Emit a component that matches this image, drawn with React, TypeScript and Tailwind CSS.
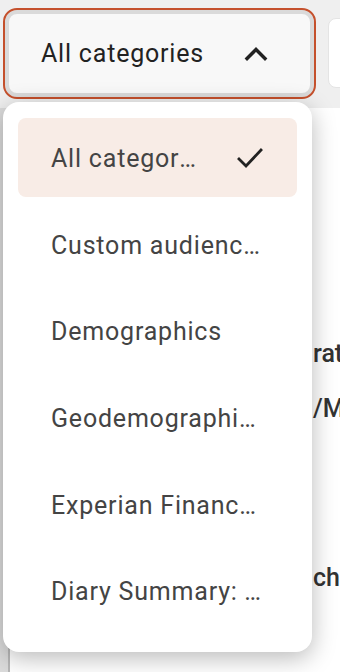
import React from 'react';

const options = [
  { label: 'All categories', width: 'max-w-[146px]' },
  { label: 'Custom audiences', width: 'max-w-[212px]' },
  { label: 'Demographics', width: 'max-w-[212px]' },
  { label: 'Geodemographics', width: 'max-w-[212px]' },
  { label: 'Experian Financial', width: 'max-w-[206px]' },
  { label: 'Diary Summary: TV', width: 'max-w-[212px]' },
];

function ChevronUp() {
  return (
    <svg width="24" height="15" viewBox="0 0 24 15" fill="none" stroke="#222" strokeWidth="3.4" strokeLinecap="square">
      <path d="M3 12.5l9-9 9 9" />
    </svg>
  );
}

function Check() {
  return (
    <svg width="28" height="24" viewBox="0 0 28 24" fill="none" stroke="#222" strokeWidth="2.8" strokeLinecap="square">
      <path d="M3 13l7 7L25 4" />
    </svg>
  );
}

export default function App() {
  return (
    <div
      className="relative w-[340px] h-[672px] overflow-hidden bg-[#dcdcdc]"
      style={{ fontFamily: 'Roboto, "Noto Sans", sans-serif' }}
    >
      {/* Header bar */}
      <div className="flex items-start gap-[12px] bg-[#efefef] h-[108px] pl-[3px] pt-[8px]">
        <button className="shrink-0 flex items-center justify-between w-[313px] h-[91px] rounded-[14px] border-2 border-[#c4502c] bg-[#f8f8f8] shadow-[inset_0_0_0_4px_#dadada] pl-[36px] pr-[46px]">
          <span className="text-[25px] text-[#222] tracking-[0.8px]">All categories</span>
          <ChevronUp />
        </button>
        <div className="shrink-0 mt-[10px] w-[40px] h-[70px] rounded-[8px] bg-white border border-[#e4e4e4]" />
      </div>

      {/* Background content panel */}
      <div className="absolute left-[8px] top-[108px] right-0 bottom-0 bg-white border-l-2 border-[#b8b8b8] pt-[231px] pl-[303px]">
        <div className="flex flex-col text-[25px] font-medium text-[#333] whitespace-nowrap">
          <span className="leading-[30px]">rat</span>
          <span className="mt-[25px] leading-[30px]">/M</span>
          <span className="mt-[139px] leading-[30px]">cha</span>
        </div>
      </div>

      {/* Dropdown menu */}
      <div className="absolute left-[3px] top-[102px] w-[309px] h-[550px] rounded-[16px] bg-white shadow-[0_6px_24px_rgba(0,0,0,0.28)] pt-[16px] px-[15px] flex flex-col gap-[7.6px]">
        {options.map((opt, i) => (
          <div
            key={opt.label}
            className={`flex items-center justify-between h-[79px] rounded-[8px] pl-[33px] pr-[33px] ${i === 0 ? 'bg-[#f8ece6]' : ''}`}
          >
            <span className={`truncate text-[25px] text-[#444] tracking-[0.8px] pt-[3px] ${opt.width}`}>
              {opt.label}
            </span>
            {i === 0 && <Check />}
          </div>
        ))}
      </div>
    </div>
  );
}
